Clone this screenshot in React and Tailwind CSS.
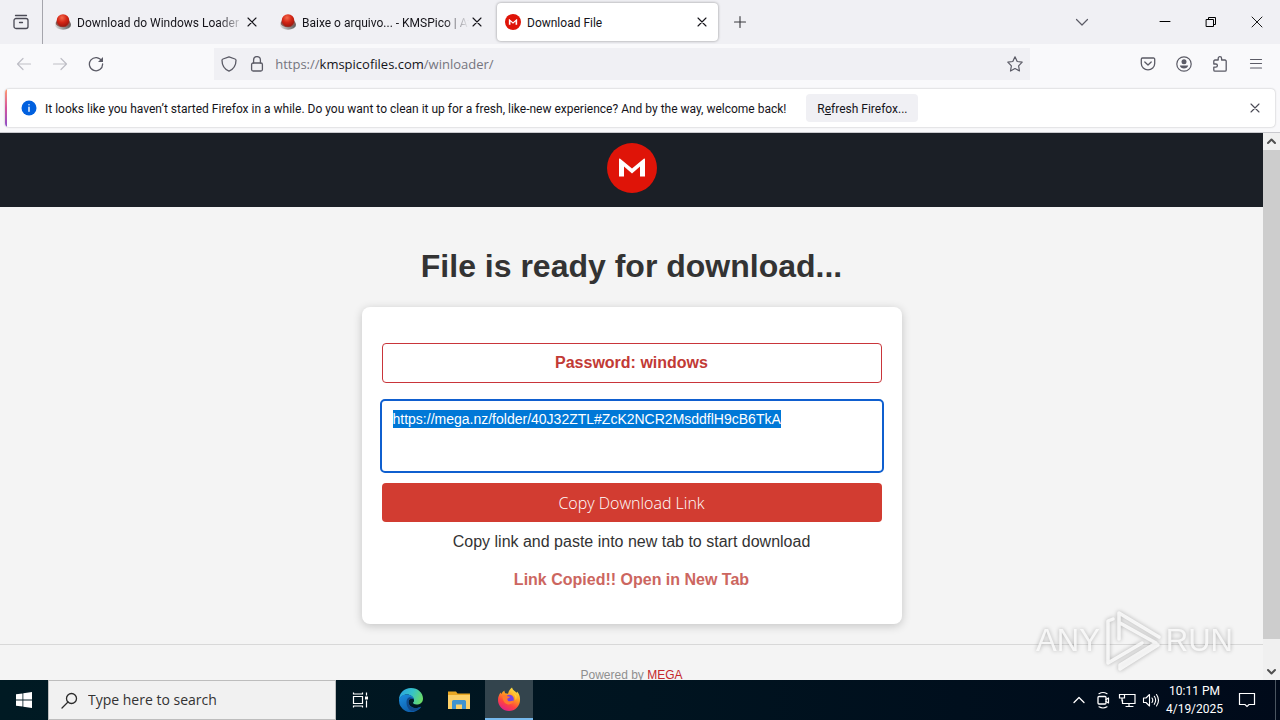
import React, { useEffect, useRef } from "react";

const ui = "font-['Open_Sans','Noto_Sans',sans-serif]";
const small = "font-['Roboto','Open_Sans',sans-serif] text-xs";

function Svg({ size = 16, children, className = "", vb = 16 }) {
  return (
    <svg width={size} height={size} viewBox={`0 0 ${vb} ${vb}`} fill="none" stroke="currentColor" strokeLinecap="round" strokeLinejoin="round" className={"shrink-0 " + className} aria-hidden="true">
      {children}
    </svg>
  );
}

const Cross = ({ className }) => (
  <Svg className={className}><path d="M4 4l8 8M12 4l-8 8" strokeWidth="1.1" /></Svg>
);

function RedButtonIcon() {
  return (
    <svg width="16" height="16" viewBox="0 0 16 16" className="shrink-0" aria-hidden="true">
      <defs>
        <radialGradient id="ball" cx="42%" cy="28%" r="75%">
          <stop offset="0" stopColor="#f4694a" />
          <stop offset=".5" stopColor="#d42616" />
          <stop offset="1" stopColor="#98160d" />
        </radialGradient>
        <linearGradient id="base" x1="0" x2="1">
          <stop offset="0" stopColor="#dcdcdc" />
          <stop offset="1" stopColor="#5a5a5a" />
        </linearGradient>
      </defs>
      <ellipse cx="8" cy="10.800" rx="8" ry="5" fill="url(#base)" />
      <ellipse cx="8" cy="9" rx="7.300" ry="4.300" fill="#8a5a54" />
      <circle cx="8" cy="6.500" r="6.300" fill="url(#ball)" />
    </svg>
  );
}

function MegaLogo({ size, className = "" }) {
  return (
    <svg width={size} height={size} viewBox="0 0 50 50" className={"shrink-0 " + className} role="img" aria-label="MEGA">
      <circle cx="25" cy="25" r="25" fill="#df1408" />
      <path d="M12 33.500V16.200c0-.7.700-1 1.200-.5L25 25.500l11.800-9.800c.5-.5 1.200-.2 1.200.5V33.500h-5V23.500L25 30.500 17 23.500V33.500z" fill="#fff" />
    </svg>
  );
}

function Tab({ icon, title, active }) {
  return (
    <div className="w-[225px] min-w-0 px-[2px] py-[3px]">
      <div className={"flex h-full items-center rounded px-2 " + (active ? "bg-white shadow-[0_0_3px_rgba(0,0,0,0.4)]" : "")}>
        {icon}
        <span className={"ml-1.5 min-w-0 flex-1 overflow-hidden whitespace-nowrap pt-px " + small + (active ? "" : " [mask-image:linear-gradient(to_right,black_85%,transparent)]")}>{title}</span>
        <button aria-label="Close tab"><Cross /></button>
      </div>
    </div>
  );
}

function TabBar() {
  return (
    <div className="flex h-11 shrink-0 bg-[#f0f0f4]">
      <button aria-label="Recent browsing" className="flex w-[43px] shrink-0 items-center justify-center border-r border-[#a5a5ac] text-[#4a4a55]">
        <Svg><path d="M2.500 1.500h11M3 4.500h10a2 2 0 0 1 2 2v6a2 2 0 0 1-2 2H3a2 2 0 0 1-2-2v-6a2 2 0 0 1 2-2zM6.500 8.500h3" strokeWidth="1.300" /></Svg>
      </button>
      <div className="flex min-w-0 pl-[2px]">
        <Tab icon={<RedButtonIcon />} title="Download do Windows Loader" />
        <Tab icon={<RedButtonIcon />} title="Baixe o arquivo... - KMSPico | At" />
        <Tab icon={<MegaLogo size={16} />} title="Download File" active />
      </div>
      <button aria-label="New tab" className="w-10 shrink-0 text-[#38383d]"><Svg className="mx-auto"><path d="M8 2.500v11M2.500 8h11" strokeWidth="1.1" /></Svg></button>
      <div className="flex-1" />
      <button aria-label="List all tabs" className="w-10 shrink-0 text-[#5b5b66]"><Svg className="mx-auto"><path d="M2.500 5.500L8 11l5.500-5.500" strokeWidth="1.2" /></Svg></button>
      <div className="ml-10 flex shrink-0 text-black">
        <button aria-label="Minimize" className="w-[46px]"><Svg size={12} vb={12} className="mx-auto"><path d="M1 5.500h10" /></Svg></button>
        <button aria-label="Restore" className="w-[46px]"><Svg size={12} vb={12} className="mx-auto"><path d="M1.500 3.500h7v7h-7zM3.500 3.500v-2h7v7h-2" strokeLinejoin="miter" /></Svg></button>
        <button aria-label="Close window" className="w-[46px]"><Svg size={12} vb={12} className="mx-auto"><path d="M1 1l10 10M11 1L1 11" strokeWidth=".9" /></Svg></button>
      </div>
    </div>
  );
}

function NavBar() {
  const btn = "flex w-9 shrink-0 items-center justify-center";
  return (
    <nav className="flex h-11 shrink-0 bg-[#f9f9fb] px-1.5 pt-1 pb-2 text-[#5b5b66]">
      <button aria-label="Back" className={btn + " text-[#bfbfc6]"}><Svg><path d="M14.500 8h-13M7 2.500L1.500 8 7 13.500" strokeWidth="1.2" /></Svg></button>
      <button aria-label="Forward" className={btn + " text-[#bfbfc6]"}><Svg><path d="M1.500 8h13M9 2.500L14.500 8 9 13.500" strokeWidth="1.2" /></Svg></button>
      <button aria-label="Reload" className={btn}><Svg><path d="M13.800 5A6.600 6.600 0 1 0 14.600 8" strokeWidth="1.3" /><path d="M15 1v5h-5z" fill="currentColor" stroke="none" /></Svg></button>
      <div className="flex-1" />
      <div className="flex min-w-0 flex-[8] items-center bg-[#f0f0f4] pr-[7px] pl-[7px]">
        <Svg><path d="M8 .8l6 2.200c.8.300 1 .6 1 1.300 0 5-2 8.700-7 10.900C3 13 1 9.300 1 4.300c0-.7.2-1 1-1.300z" strokeWidth="1.300" /></Svg>
        <Svg className="ml-3"><rect x="2.600" y="7" width="10.800" height="8" rx="1.500" strokeWidth="1.300" /><path d="M4.600 7V4a3.400 3.400 0 0 1 6.800 0v3" strokeWidth="1.300" /></Svg>
        <a href="#address" className="ml-2.5 flex-1 truncate pt-[2px] text-[13px] text-[#75757e]">https://<span className="text-[#15141a]">kmspicofiles.com</span>/winloader/</a>
        <button aria-label="Bookmark"><Svg><path d="M8 .8l2.200 4.700 5 .7-3.600 3.600.9 5.200L8 12.500 3.500 15l.9-5.200L.8 6.200l5-.7z" strokeWidth="1.200" /></Svg></button>
      </div>
      <div className="flex-1" />
      <button aria-label="Pocket" className={btn}><Svg><path d="M2.500 2h11a1.200 1.200 0 0 1 1.200 1.200V7.500a6.700 6.300 0 0 1-13.400 0V3.200A1.200 1.200 0 0 1 2.500 2zM4.800 6L8 9l3.200-3" strokeWidth="1.300" /></Svg></button>
      <button aria-label="Account" className={btn}><Svg><circle cx="8" cy="8" r="7.200" strokeWidth="1.200" /><circle cx="8" cy="5.800" r="2.500" fill="currentColor" stroke="none" /><path d="M3.800 9.500h8.400c-.4 2-2.200 3-4.200 3s-3.800-1-4.200-3z" fill="currentColor" stroke="none" /></Svg></button>
      <button aria-label="Extensions" className={btn}><Svg><path d="M6.200 4V2.400a1.700 1.700 0 0 1 3.400 0V4H13a1.200 1.200 0 0 1 1.200 1.200V14a1.200 1.200 0 0 1-1.200 1.200H3A1.200 1.200 0 0 1 1.800 14v-2.800h2a1.600 1.600 0 0 0 0-3.200h-2V5.200A1.200 1.200 0 0 1 3 4z" strokeWidth="1.300" /></Svg></button>
      <button aria-label="Menu" className={btn}><Svg><path d="M2.500 3.500h11M2.500 7.500h11M2.500 12h11" strokeWidth="1.200" /></Svg></button>
    </nav>
  );
}

function Notice() {
  return (
    <div className="h-[45px] shrink-0 border-b border-[#c9c9ce] bg-[#f9f9fb] px-[5px] pt-[1px]">
      <div className="flex h-[38px] overflow-hidden rounded bg-white shadow-[0_0_2px_rgba(0,0,0,0.3)]">
        <div className="w-[2px] shrink-0 bg-linear-to-b from-[#ff9a6b] via-[#d4519c] to-[#8b4bc8]" />
        <div className="flex min-w-0 flex-1 items-center pl-3.5 pr-3">
          <Svg className="text-[#0060df]"><circle cx="8" cy="8" r="7.500" fill="#0060df" stroke="none" /><path d="M8 7.300v4M8 4.700v.1" stroke="#fff" strokeWidth="1.400" /></Svg>
          <span className={"ml-2 truncate pt-px " + small}>It looks like you haven’t started Firefox in a while. Do you want to clean it up for a fresh, like-new experience? And by the way, welcome back!</span>
          <button className={"ml-5 h-7 w-[112px] shrink-0 rounded bg-[#f0f0f4] pt-px " + small}>R<span className="underline">e</span>fresh Firefox...</button>
          <div className="flex-1" />
          <button aria-label="Dismiss" className="text-[#4a4a55]"><Cross /></button>
        </div>
      </div>
    </div>
  );
}

function Watermark() {
  return (
    <div className="pointer-events-none absolute right-[47px] bottom-1 flex h-[70px] items-center gap-1 font-['Liberation_Sans',sans-serif] text-[31px] text-white/80 drop-shadow-[0_0_2px_rgba(0,0,0,0.35)]">
      <span>ANY</span>
      <svg width="58" height="64" viewBox="0 0 58 64" fill="none" stroke="currentColor" strokeWidth="3.500" strokeLinejoin="round" strokeLinecap="round" aria-hidden="true">
        <path d="M15 30V4l40 24M16 14l36 20L16 56v4l38-24M9 10L4 12v42l34-20" />
      </svg>
      <span>RUN</span>
    </div>
  );
}

function Page() {
  const link = useRef(null);
  useEffect(() => {
    link.current.focus();
    link.current.select();
  }, []);
  return (
    <div className="relative flex min-h-0 flex-1 bg-[#f4f4f4] font-['Liberation_Sans',Arial,sans-serif]">
      <div className="min-w-0 flex-1 overflow-hidden">
        <header className="flex justify-center bg-[#1b1f26] pt-2.5 pb-3.5"><MegaLogo size={50} /></header>
        <main className="flex flex-col items-center px-5 pb-5">
          <h1 className="mt-[39px] text-[32px] leading-10 font-bold text-[#333]">File is ready for download...</h1>
          <section className="mt-[21px] w-full max-w-[540px] rounded-lg bg-white px-5 pt-9 pb-8 text-center shadow-[0_2px_10px_rgba(0,0,0,0.2)]">
            <p className="rounded border border-[#c9353a] py-[7px] text-base font-bold text-[#c23a35]">Password: windows</p>
            <textarea ref={link} readOnly aria-label="Download link" defaultValue="https://mega.nz/folder/40J32ZTL#ZcK2NCR2MsddflH9cB6TkA" className="mt-[18px] block h-[70px] w-full resize-none rounded-[3px] px-[11px] py-[9px] text-sm leading-[18px] outline-2 outline-[#0f5fcf] selection:bg-[#0078d7] selection:text-white" />
            <button className="mt-3 h-[39px] w-full rounded bg-[#d23c31] font-['Open_Sans',sans-serif] text-base font-light text-white">Copy Download Link</button>
            <p className="mt-2 text-base text-[#333]">Copy link and paste into new tab to start download</p>
            <p className="mt-3.5 text-base font-bold text-[#cc6660]">Link Copied!! Open in New Tab</p>
          </section>
        </main>
        <footer className="border-t border-[#d8d8d8] pt-5 text-center text-xs leading-5 text-[#8f8f8f]">Powered by <a href="#mega" className="text-[#c5282c]">MEGA</a></footer>
      </div>
      <div className="flex w-[17px] shrink-0 flex-col bg-[#f0f0f0] text-[#505050]">
        <button aria-label="Scroll up" className="h-[17px]"><Svg size={9} vb={9} className="mx-auto"><path d="M1 6l3.500-3.500L8 6" strokeWidth="2" /></Svg></button>
        <div className="flex-[489] bg-[#cdcdcd]" />
        <div className="flex-[24]" />
        <button aria-label="Scroll down" className="h-[17px]"><Svg size={9} vb={9} className="mx-auto"><path d="M1 3l3.500 3.500L8 3" strokeWidth="2" /></Svg></button>
      </div>
      <Watermark />
    </div>
  );
}

function EdgeIcon() {
  return (
    <svg width="24" height="24" viewBox="0 0 24 24" aria-hidden="true">
      <defs>
        <linearGradient id="edgeTop" x1="0" y1=".3" x2="1" y2=".6"><stop offset="0" stopColor="#2aa5e0" /><stop offset=".5" stopColor="#35c2c9" /><stop offset="1" stopColor="#6bdc65" /></linearGradient>
        <linearGradient id="edgeLow" x1="0" y1="0" x2=".7" y2="1"><stop offset="0" stopColor="#1b8ee0" /><stop offset="1" stopColor="#0c59a4" /></linearGradient>
      </defs>
      <path d="M0 12C0 5 5 0 12 0s12 5 12 10.500c0 4-3 6-6.500 6-2.500 0-3.700-.8-3.500-1.700.2-.6 1-1.200 1-2.800C15 9 11.500 6.500 8 6.500 4 6.500 1 9 0 12z" fill="url(#edgeTop)" />
      <path d="M0 12C.5 8.500 4 6.500 8 6.500c3.500 0 7 2.200 7 5.300-1-1.800-5.500-1.500-5.500 2.200 0 4 4.500 6.500 8.500 6 2-.3 3.500-1.500 4-1.200.4.300-1.500 2.200-3.500 3.500A12 12 0 0 1 0 12z" fill="url(#edgeLow)" />
      <path d="M7.500 14c0-2.200 1-4 2.800-4.800C13 9 15 10.500 15 12c-1-1.600-5.500-1.400-5.500 2 0 4 4.500 6.500 8.500 6 1-.1 2-.6 2.800-.9-1.500 2.700-4.500 4.200-7.500 4C9.500 22.500 7.500 18 7.500 14z" fill="#114a8b" />
      <path d="M10 13.800c0-1.800 1.300-2.900 2.800-2.900 1.400 0 2.300.7 2.100 1.900-.2 1-1 1.400-.9 2.100.1.900 1.200 1.400 2.300 1.600-2.800 1.400-6.300.4-6.300-2.700z" fill="#021d2a" />
    </svg>
  );
}

function FolderIcon() {
  return (
    <svg width="22" height="20" viewBox="0 0 22 20" aria-hidden="true">
      <path d="M0 1.500h8l1.500 2H22V18H0z" fill="#e9a723" />
      <path d="M0 5h22v14H0z" fill="#fcd068" />
      <path d="M4 19v-7.500a1.500 1.500 0 0 1 1.500-1.500h11a1.500 1.500 0 0 1 1.500 1.500V19h-4v-4.500H8V19z" fill="#3f93cf" />
    </svg>
  );
}

function FirefoxIcon() {
  return (
    <svg width="24" height="24" viewBox="0 0 24 24" aria-hidden="true">
      <defs>
        <linearGradient id="fox" x1=".8" y1="0" x2=".3" y2="1"><stop offset="0" stopColor="#fff04a" /><stop offset=".4" stopColor="#ff9a1f" /><stop offset=".7" stopColor="#ff4340" /><stop offset="1" stopColor="#e0208a" /></linearGradient>
      </defs>
      <path d="M15 .5c.6 2.500 3 3.500 4.500 5.300.5-.2.600-.8.500-1.300 2 2 3.300 5 3 8.500A11 11 0 0 1 1 13c0-3 1-5.500 2.700-7.500.1.700.3 1.100.7 1.500C5 5.500 6 4.300 7.500 3.500c-.2 1 .1 2 .7 2.700 1 .1 2 .2 2.800.6C11.500 4.500 13 2 15 .5z" fill="url(#fox)" />
      <circle cx="12.500" cy="12" r="4.300" fill="#7542e5" />
      <path d="M5.500 9c1.500-1 3.500-.8 5 .2l2.500.5c0 1-1.500 1.300-2.500 1.800-.5 1.500.5 3 2.500 2.800 1.500-.2 2.500-.8 3.500-.2 0 2-2.500 3.500-5 3.300-3.500-.3-6-3.400-6-8.400z" fill="#ff7a2e" />
      <path d="M14 5.500c3 1 5 4 4.500 7.500 1-1 1.200-2.500 1-4C18.500 7.500 16.500 6 14 5.500z" fill="#ffd23a" />
    </svg>
  );
}

function Taskbar() {
  const item = "flex w-12 shrink-0 items-center justify-center";
  return (
    <footer className="flex h-10 shrink-0 bg-linear-to-r from-[#001a23] via-[#001420] to-[#000a1a] text-white">
      <button aria-label="Start" className={item}>
        <svg width="16" height="16" viewBox="0 0 16 16" fill="#fff" aria-hidden="true"><path d="M0 2.300L6.500 1.400V7.600H0zM7.300 1.300L16 0v7.600H7.300zM0 8.400h6.500v6.200L0 13.700zM7.300 8.400H16V16l-8.700-1.300z" /></svg>
      </button>
      <label className="flex w-72 shrink items-center border border-[#bdbdbd] bg-[#f1f1f1] pl-3 text-[#2b2b2b]">
        <Svg size={17} vb={17}><circle cx="10.500" cy="6.500" r="5" strokeWidth="1.300" /><path d="M7 10l-6 6" strokeWidth="1.300" /></Svg>
        <input aria-label="Search" placeholder="Type here to search" className="ml-2.5 w-full min-w-0 text-sm outline-none placeholder:text-[#333]" />
      </label>
      <button aria-label="Task view" className={item}>
        <Svg size={18} vb={18}><path d="M2.500 5.500h9v7h-9zM2.500 1.500v1.500h9V1.500M2.500 16.500V15h9v1.500M15.500 1.500v3M15.500 9.500v7" strokeWidth="1.200" strokeLinecap="butt" strokeLinejoin="miter" /><path d="M14 5.500h3v3h-3z" fill="#fff" stroke="none" /></Svg>
      </button>
      <button aria-label="Edge" className={item + " ml-[3px]"}><EdgeIcon /></button>
      <button aria-label="File Explorer" className={item}><FolderIcon /></button>
      <button aria-label="Firefox" className={item + " ml-[2px] border-b-2 border-[#76b9ed] bg-[#33444d]"}><FirefoxIcon /></button>
      <div className="flex-1" />
      <div className="flex shrink-0 items-center gap-1.5">
        <Svg size={18} vb={18}><path d="M4 11.500l5-5 5 5" strokeWidth="1.300" /></Svg>
        <Svg size={18} vb={18}><rect x="4" y="5.500" width="8" height="7.500" rx="1" strokeWidth="1.300" /><path d="M12 8.500L14.500 7v5L12 10.500M5 2.700q4-2.400 8 0M5 15.800q4 2.400 8 0" strokeWidth="1.200" /></Svg>
        <Svg size={18} vb={18}><path d="M6.500 3.500h10.500v9H4.500V9M8 15.500h7M11 12.500v3M1.500 3.500h5v3.500h-5zM4 7v3" strokeWidth="1.200" strokeLinejoin="miter" /></Svg>
        <Svg size={18} vb={18}><path d="M1.500 7v4.500h2.500L7.500 15V3.500L4 7zM10 7q1.500 2.200 0 4.500M12.300 5.300q2.700 4 0 8M14.500 3.500q4 5.700 0 11.500" strokeWidth="1.100" /></Svg>
      </div>
      <div className={"w-[69px] shrink-0 pt-0.5 text-center " + small}><div className="leading-[18px]">10:11 PM</div><div className="leading-[18px]">4/19/2025</div></div>
      <button aria-label="Notifications" className="flex w-9 shrink-0 items-center justify-center">
        <Svg size={18} vb={18}><path d="M1.500 2.500h15v11H11L9 15.500 7 13.500H1.500z" strokeWidth="1.200" strokeLinejoin="miter" /></Svg>
      </button>
      <div className="ml-2.5 w-[5px] shrink-0 border-l border-[#4a5560]" />
    </footer>
  );
}

export default function App() {
  return (
    <div className={"flex h-screen flex-col overflow-hidden text-[#15141a] " + ui}>
      <TabBar />
      <NavBar />
      <Notice />
      <Page />
      <Taskbar />
    </div>
  );
}
